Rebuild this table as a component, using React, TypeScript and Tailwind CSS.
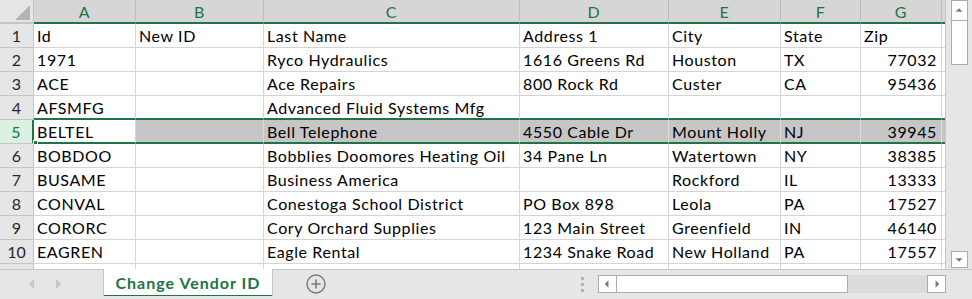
import React from 'react';

type Row = string[];

const colWidths = ['w-[102px]', 'w-[128px]', 'w-[256px]', 'w-[149px]', 'w-[112px]', 'w-[80px]', 'w-[81px]', 'w-[4px]'];
const letters = ['A', 'B', 'C', 'D', 'E', 'F', 'G', ''];

const rows: Row[] = [
  ['Id', 'New ID', 'Last Name', 'Address 1', 'City', 'State', 'Zip', 'P'],
  ['1971', '', 'Ryco Hydraulics', '1616 Greens Rd', 'Houston', 'TX', '77032', '('],
  ['ACE', '', 'Ace Repairs', '800 Rock Rd', 'Custer', 'CA', '95436', '('],
  ['AFSMFG', '', 'Advanced Fluid Systems Mfg', '', '', '', '', ''],
  ['BELTEL', '', 'Bell Telephone', '4550 Cable Dr', 'Mount Holly', 'NJ', '39945', '('],
  ['BOBDOO', '', 'Bobblies Doomores Heating Oil', '34 Pane Ln', 'Watertown', 'NY', '38385', '('],
  ['BUSAME', '', 'Business America', '', 'Rockford', 'IL', '13333', ''],
  ['CONVAL', '', 'Conestoga School District', 'PO Box 898', 'Leola', 'PA', '17527', ''],
  ['CORORC', '', 'Cory Orchard Supplies', '123 Main Street', 'Greenfield', 'IN', '46140', '('],
  ['EAGREN', '', 'Eagle Rental', '1234 Snake Road', 'New Holland', 'PA', '17557', ''],
  ['', '', '', '', '', '', '', ''],
];

const SELECTED = 5;

function Corner() {
  return (
    <div className="w-[34px] h-[24px] shrink-0 bg-[#e6e6e6] border-r border-b-2 border-r-[#c6c6c6] border-b-[#c6c6c6]">
      <svg width="34" height="22" className="block">
        <polygon points="30,5 30,20 15,20" fill="#b4b4b4" />
      </svg>
    </div>
  );
}

function HeaderRow() {
  return (
    <div className="flex h-[24px]">
      <Corner />
      {letters.map((l, i) => (
        <div
          key={i}
          className={`${colWidths[i]} shrink-0 h-[24px] bg-[#d6d6d6] border-r border-r-[#bcbcbc] border-b-2 border-b-[#217346] text-center text-[#217346] leading-[22px] pt-px overflow-hidden`}
        >
          {l}
        </div>
      ))}
    </div>
  );
}

function DataRow({ row, n }: { row: Row; n: number }) {
  const sel = n === SELECTED;
  const above = n === SELECTED - 1;
  const green = sel || above;
  return (
    <div className="flex h-[24px] relative">
      <div
        className={`w-[34px] shrink-0 h-[24px] border-b border-b-[#c6c6c6] text-center leading-[22px] pt-px tracking-normal ${
          sel
            ? 'bg-[#dbf1e3] text-[#217346] border-r-2 border-r-[#217346]'
            : 'bg-[#e6e6e6] text-[#262626] border-r border-r-[#c6c6c6]'
        }`}
      >
        {n <= 10 ? n : ''}
      </div>
      {row.map((v, i) => (
        <div
          key={i}
          className={`${colWidths[i]} shrink-0 h-[24px] border-r overflow-hidden whitespace-nowrap px-[3px] pt-px ${
            green ? 'border-b-2 border-b-[#217346] leading-[21px]' : 'border-b border-b-[#d4d4d4] leading-[22px]'
          } ${sel && i > 0 ? 'bg-[#c6c6c6] border-r-[#dcdcdc]' : 'bg-white border-r-[#d4d4d4]'} ${
            i === 6 && n > 1 ? 'text-right pr-[4px]' : ''
          }`}
        >
          {v}
        </div>
      ))}
      {/* fill handle of the row selection */}
      {sel && <div className="absolute left-[33px] top-[20px] w-[5px] h-[5px] bg-[#217346] border border-white" />}
    </div>
  );
}

function ScrollButton({ dir, tall }: { dir: 'up' | 'down' | 'left' | 'right'; tall?: boolean }) {
  const pts = {
    up: '5,7 9,3 13,7',
    down: '5,4 13,4 9,8',
    left: '10,5 10,13 6,9',
    right: '8,5 8,13 12,9',
  }[dir];
  const vertical = dir === 'up' || dir === 'down';
  return (
    <div
      className={`bg-white border border-[#ababab] flex items-center justify-center ${
        vertical ? (tall ? 'w-[17px] h-[21px]' : 'w-[17px] h-[17px]') : 'w-[19px] h-[18px]'
      }`}
    >
      <svg width={vertical ? 17 : 18} height={vertical ? 11 : 18} viewBox={vertical ? '1 0 17 11' : '0 0 18 18'}>
        <polygon points={pts} fill="#777777" />
      </svg>
    </div>
  );
}

export default function App() {
  return (
    <div className="w-[972px] h-[299px] bg-[#e6e6e6] overflow-hidden flex flex-col font-[Lato,sans-serif] text-[16px] tracking-[0.6px] text-black">
      <div className="flex h-[270px] border-b border-b-[#c6c6c6]">
        <div className="w-[946px] h-[269px] overflow-hidden bg-white border-r border-r-[#c6c6c6]">
          <HeaderRow />
          {rows.map((r, i) => (
            <DataRow key={i} row={r} n={i + 1} />
          ))}
        </div>
        <div className="flex-1 flex flex-col items-center pb-px">
          <ScrollButton dir="up" tall />
          <div className="w-[17px] h-[45px] bg-white border border-[#ababab] -mt-px" />
          <div className="flex-1" />
          <ScrollButton dir="down" />
        </div>
      </div>

      <div className="flex-1 flex items-start">
        <div className="w-[103px] h-[28px] flex items-center gap-[20px] pl-[27px]">
          <svg width="8" height="12">
            <polygon points="7,1 7,11 2,6" fill="#c6c6c6" />
          </svg>
          <svg width="8" height="12">
            <polygon points="1,1 1,11 6,6" fill="#c6c6c6" />
          </svg>
        </div>
        <div className="w-[170px] h-[27px] bg-white border-x border-[#c6c6c6] -mt-px flex flex-col">
          <div className="flex-1 flex items-center justify-center font-bold text-[#217346] tracking-[1px] pt-[2px]">
            Change Vendor ID
          </div>
          <div className="h-[3px] bg-[#217346]" />
        </div>
        <div className="w-[86px] h-[28px] flex items-center justify-center">
          <svg width="20" height="20" viewBox="0 0 20 20">
            <circle cx="10" cy="10" r="9" fill="none" stroke="#7a7a7a" strokeWidth="1.4" />
            <path d="M10 5.5v9M5.5 10h9" stroke="#7a7a7a" strokeWidth="1.6" />
          </svg>
        </div>
        <div className="flex-1" />
        <div className="h-[28px] flex flex-col justify-center gap-[3px] mr-[14px]">
          <div className="w-[3px] h-[3px] bg-[#b4b4b4]" />
          <div className="w-[3px] h-[3px] bg-[#b4b4b4]" />
          <div className="w-[3px] h-[3px] bg-[#b4b4b4]" />
        </div>
        <div className="flex mt-[5px] mr-[26px]">
          <ScrollButton dir="left" />
          <div className="w-[232px] h-[18px] bg-white border border-[#ababab] -ml-px" />
          <div className="w-[79px] h-[18px] bg-[#dcdcdc]" />
          <ScrollButton dir="right" />
        </div>
      </div>
    </div>
  );
}
